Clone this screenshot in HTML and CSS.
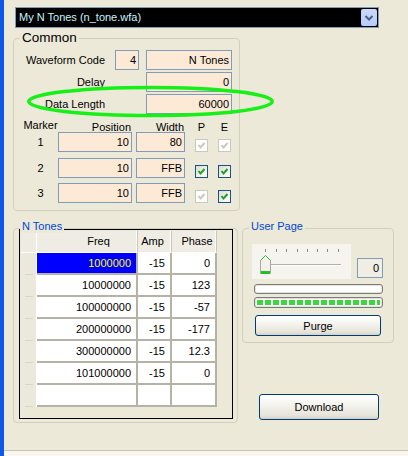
FILE: index.html
```html
<!DOCTYPE html>
<html lang="en">
<head>
    <meta charset="UTF-8">
    <title>N Tones</title>
    <link rel="stylesheet" href="styles.css">
</head>
<body>
    <div class="window">
        <div class="combo">
            <span class="combo-text">My N Tones (n_tone.wfa)</span>
            <span class="combo-btn">
                <svg width="16" height="17" viewBox="0 0 16 17"><path d="M4.5 7 L8 10.5 L11.5 7" fill="none" stroke="#4d6185" stroke-width="2"/></svg>
            </span>
        </div>

        <div class="group common">
            <span class="group-title">Common</span>

            <div class="field-row">
                <span class="field-label">Waveform Code</span>
                <span class="box box-code">4</span>
                <span class="box box-wide">N Tones</span>
            </div>
            <div class="field-row no-code">
                <span class="field-label">Delay</span>
                <span class="box box-wide">0</span>
            </div>
            <div class="field-row no-code">
                <span class="field-label">Data Length</span>
                <span class="box box-wide">60000</span>
            </div>

            <div class="marker-head">
                <span class="mk-num">Marker</span>
                <span class="mk-pos low">Position</span>
                <span class="mk-wid low">Width</span>
                <span class="mk-chk low">P</span>
                <span class="mk-chk low">E</span>
            </div>
            <div class="marker-row">
                <span class="mk-num">1</span>
                <span class="box mk-pos">10</span>
                <span class="box mk-wid">80</span>
                <span class="mk-chk check disabled"><svg width="11" height="11" viewBox="0 0 11 11"><path d="M2.5 5 L4.5 7.5 L8.5 3" fill="none" stroke-width="2"/></svg></span>
                <span class="mk-chk check disabled"><svg width="11" height="11" viewBox="0 0 11 11"><path d="M2.5 5 L4.5 7.5 L8.5 3" fill="none" stroke-width="2"/></svg></span>
            </div>
            <div class="marker-row second">
                <span class="mk-num">2</span>
                <span class="box mk-pos">10</span>
                <span class="box mk-wid">FFB</span>
                <span class="mk-chk check"><svg width="11" height="11" viewBox="0 0 11 11"><path d="M2.5 5 L4.5 7.5 L8.5 3" fill="none" stroke-width="2"/></svg></span>
                <span class="mk-chk check"><svg width="11" height="11" viewBox="0 0 11 11"><path d="M2.5 5 L4.5 7.5 L8.5 3" fill="none" stroke-width="2"/></svg></span>
            </div>
            <div class="marker-row third">
                <span class="mk-num">3</span>
                <span class="box mk-pos">10</span>
                <span class="box mk-wid">FFB</span>
                <span class="mk-chk check disabled"><svg width="11" height="11" viewBox="0 0 11 11"><path d="M2.5 5 L4.5 7.5 L8.5 3" fill="none" stroke-width="2"/></svg></span>
                <span class="mk-chk check"><svg width="11" height="11" viewBox="0 0 11 11"><path d="M2.5 5 L4.5 7.5 L8.5 3" fill="none" stroke-width="2"/></svg></span>
            </div>
        </div>

        <div class="lower">
            <div class="group ntones">
                <span class="group-title blue">N Tones</span>
                <div class="grid-frame">
                    <div class="grid" id="tone-grid">
                        <span class="gr"></span>
                        <span class="gh freq">Freq</span>
                        <span class="gh amp">Amp</span>
                        <span class="gh phase">Phase</span>
                    </div>
                </div>
            </div>

            <div class="side">
                <div class="group userpage">
                    <span class="group-title blue">User Page</span>
                    <div class="slider-row">
                        <div class="slider">
                            <svg width="99" height="35" viewBox="0 0 99 35">
                                <g stroke="#8e8c80" stroke-width="1">
                                    <line x1="13.5" y1="5" x2="13.5" y2="8"/>
                                    <line x1="24.5" y1="5" x2="24.5" y2="8"/>
                                    <line x1="34.5" y1="5" x2="34.5" y2="8"/>
                                    <line x1="45.5" y1="5" x2="45.5" y2="8"/>
                                    <line x1="55.5" y1="5" x2="55.5" y2="8"/>
                                    <line x1="65.5" y1="5" x2="65.5" y2="8"/>
                                    <line x1="75.5" y1="5" x2="75.5" y2="8"/>
                                    <line x1="86.5" y1="5" x2="86.5" y2="8"/>
                                </g>
                                <line x1="14" y1="20.5" x2="89" y2="20.5" stroke="#b3b1a6" stroke-width="1"/>
                                <line x1="14" y1="21.5" x2="89" y2="21.5" stroke="#ffffff" stroke-width="1"/>
                                <path d="M8.5 16.5 L13.5 11.5 L18.5 16.5 V29.5 H8.5 Z" fill="#f2f1ec" stroke="#a9a79c"/>
                                <path d="M8.5 16.5 L13.5 11.5 L18.5 16.5" fill="none" stroke="#3cb43c"/>
                                <rect x="9" y="27" width="9" height="3" fill="#21c121"/>
                            </svg>
                        </div>
                        <span class="value-box">0</span>
                    </div>
                    <div class="progress"></div>
                    <div class="progress"><span class="progress-fill"></span></div>
                    <button class="xp-btn purge">Purge</button>
                </div>
                <button class="xp-btn download">Download</button>
            </div>
        </div>

        <div class="statusline"></div>
    </div>

    <svg class="highlight" width="408" height="456" viewBox="0 0 408 456">
        <ellipse cx="150.5" cy="101.5" rx="121.75" ry="14" fill="none" stroke="#16f016" stroke-width="3.5"/>
    </svg>

    <script>
        const tones = [
            ['1000000', '-15', '0'],
            ['10000000', '-15', '123'],
            ['100000000', '-15', '-57'],
            ['200000000', '-15', '-177'],
            ['300000000', '-15', '12.3'],
            ['101000000', '-15', '0'],
            ['', '', '']
        ];

        const grid = document.getElementById('tone-grid');
        let html = '';
        tones.forEach((tone, i) => {
            html += `<span class="gr"></span>`;
            html += `<span class="gc${i === 0 ? ' selected' : ''}">${tone[0]}</span>`;
            html += `<span class="gc">${tone[1]}</span>`;
            html += `<span class="gc">${tone[2]}</span>`;
        });
        grid.insertAdjacentHTML('beforeend', html);
    </script>
</body>
</html>
```

FILE: styles.css
```css
* {
    box-sizing: border-box;
}
html, body {
    margin: 0;
    padding: 0;
}
body {
    position: relative;
    width: 408px;
    height: 456px;
    overflow: hidden;
    font-family: "Liberation Sans", Arial, sans-serif;
    font-size: 11px;
    color: #000;
    background-color: #ece9d8;
}
.window {
    display: flex;
    flex-direction: column;
    height: 456px;
    border-left: 4px solid #0d58e6;
}

/* combo box */
.combo {
    display: flex;
    width: 364px;
    height: 21px;
    margin: 7px 0 0 11px;
    border: 1px solid #7f9db9;
    background-color: #000;
}
.combo-text {
    padding-left: 3px;
    line-height: 19px;
    color: #c8f4ff;
}
.combo-btn {
    width: 16px;
    height: 17px;
    margin: 1px 1px 1px auto;
    border-radius: 2px;
    background: linear-gradient(#cbd9fb, #b6cbf8);
}
.combo-btn svg {
    display: block;
}

/* group boxes */
.group {
    position: relative;
    border: 1px solid #d0d0bf;
    border-radius: 4px;
}
.group-title {
    position: absolute;
    top: -9px;
    left: 6px;
    padding: 0 2px;
    background-color: #ece9d8;
    font-size: 13.5px;
    line-height: 16px;
}
.group-title.blue {
    font-size: 11px;
    line-height: 13px;
    color: #0046d5;
}

.common {
    width: 227px;
    height: 173px;
    margin: 10px 0 0 9px;
    padding-top: 11px;
}
.field-row {
    display: flex;
    align-items: center;
    height: 20px;
    margin-bottom: 2px;
}
.field-label {
    width: 91px;
    margin-right: 10px;
    text-align: right;
}
.box {
    height: 20px;
    padding-right: 2px;
    border: 1px solid #7f9db9;
    background-color: #fce9d6;
    text-align: right;
    line-height: 18px;
}
.box-code {
    width: 24px;
    margin-right: 7px;
}
.box-wide {
    width: 86px;
}
.no-code .box-wide {
    margin-left: 31px;
}

/* markers */
.marker-head,
.marker-row {
    display: flex;
}
.marker-head {
    height: 13px;
    margin-top: 5px;
    line-height: 13px;
}
.marker-head .low {
    padding-top: 2px;
}
.marker-row {
    height: 20px;
    align-items: center;
}
.marker-row.second {
    margin-top: 6px;
}
.marker-row.third {
    margin-top: 5px;
}
.mk-num {
    width: 44px;
    padding-left: 9px;
    text-align: center;
}
.mk-pos {
    width: 74px;
    text-align: right;
}
.marker-head .mk-pos {
    padding-right: 1px;
}
.mk-wid {
    width: 49px;
    margin-left: 4px;
    text-align: right;
}
.marker-head .mk-wid {
    padding-right: 1px;
}
.mk-chk {
    width: 13px;
    margin-left: 10px;
    text-align: center;
}
.check {
    align-self: flex-end;
    height: 13px;
    border: 1px solid #1c5180;
    background: linear-gradient(135deg, #dcdcd5, #ffffff);
}
.check svg {
    display: block;
    stroke: #21a121;
}
.check.disabled {
    border-color: #cac8bb;
    background: #ffffff;
}
.check.disabled svg {
    stroke: #cac8bb;
}

/* lower area */
.lower {
    display: flex;
    gap: 4px;
    margin: 17px 0 0 9px;
}
.ntones {
    width: 225px;
    height: 195px;
}
.grid-frame {
    width: 214px;
    height: 190px;
    margin-left: 5px;
    padding: 1px 0 0 1px;
    border: 1px solid #000;
    background-color: #ece9d8;
}
.grid {
    display: grid;
    grid-template-columns: 16px 101px 34px 45px;
    grid-auto-rows: 22px;
    width: 196px;
}
.gr {
    border-right: 1px solid #ffffff;
    background: linear-gradient(#d9d6c8, #d9d6c8) no-repeat 4px 21px / 8px 1px, #ebe9dc;
}
.grid .gr:first-child {
    border-bottom: 1px solid #ffffff;
    background: #eeece2;
}
.gh {
    border-right: 1px solid #c9c6b6;
    border-bottom: 1px solid #ffffff;
    background-color: #efede3;
    line-height: 21px;
    text-align: center;
    box-shadow: inset -2px 0 0 -1px #ffffff;
}
.gh.freq {
    padding-left: 23px;
}
.gh.amp {
    padding-right: 4px;
}
.gh.phase {
    padding-left: 6px;
}
.gc {
    padding-right: 5px;
    border-right: 2px solid #b5b2a6;
    border-bottom: 2px solid #b5b2a6;
    background-color: #ffffff;
    line-height: 20px;
    text-align: right;
}
.gc.selected {
    background-color: #0000ff;
    color: #ffff00;
}

/* right side */
.side {
    display: flex;
    flex-direction: column;
}
.userpage {
    width: 152px;
    height: 115px;
}
.slider-row {
    display: flex;
    align-items: flex-end;
    margin: 15px 0 0 9px;
}
.slider {
    width: 99px;
    height: 35px;
    background-color: #f5f4ef;
}
.slider svg {
    display: block;
}
.value-box {
    width: 26px;
    height: 20px;
    margin: 0 0 1px 6px;
    padding-right: 3px;
    border: 1px solid #7f9db9;
    background-color: #efede4;
    text-align: right;
    line-height: 18px;
}
.progress {
    width: 129px;
    height: 10px;
    margin: 5px 0 0 11px;
    padding: 2px 2px;
    border: 1px solid #7b7b78;
    border-radius: 3px;
    background-color: #ffffff;
    box-shadow: inset 0 0 0 1px #e4e3dc;
}
.progress + .progress {
    height: 11px;
    margin-top: 3px;
}
.progress-fill {
    display: block;
    height: 5px;
    background: repeating-linear-gradient(to right, #3ad83a 0 6px, transparent 6px 8px);
}
.xp-btn {
    display: block;
    padding: 0;
    border: 1px solid #003c74;
    border-radius: 3px;
    background: linear-gradient(#ffffff, #f3f2ec 45%, #e6e4da 85%, #d6d0c5);
    font-family: "Liberation Sans", Arial, sans-serif;
    font-size: 11px;
    color: #000;
}
.purge {
    width: 126px;
    height: 21px;
    margin: 7px 0 0 12px;
}
.download {
    width: 120px;
    height: 26px;
    margin: 51px 0 0 17px;
}

.statusline {
    height: 6px;
    margin-top: auto;
    border-top: 1px solid #c5c2b2;
    background-color: #f7f6f1;
}

.highlight {
    position: absolute;
    top: 0;
    left: 0;
    pointer-events: none;
}
```
